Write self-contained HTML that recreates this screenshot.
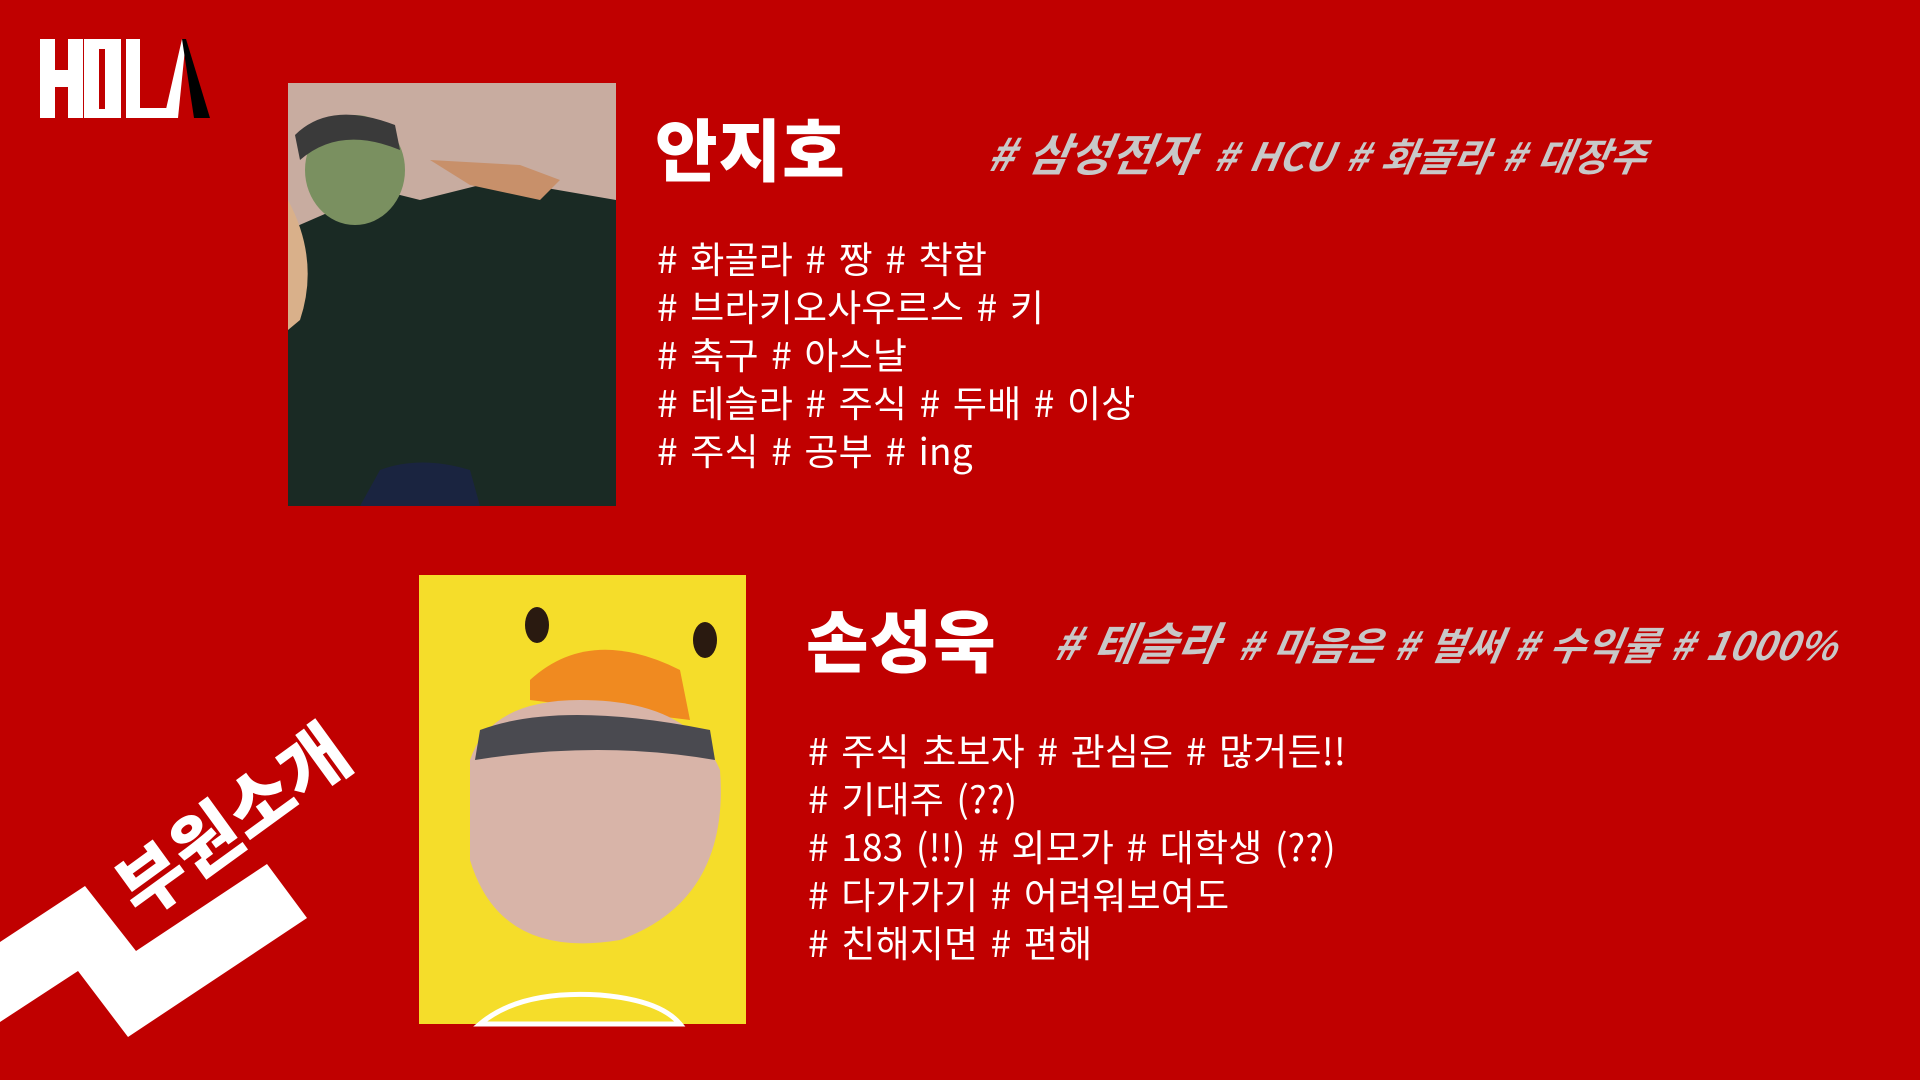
<!DOCTYPE html>
<html><head><meta charset="utf-8"><style>
*{margin:0;padding:0;box-sizing:border-box}
body{width:1920px;height:1080px;background:#c00000;position:relative;overflow:hidden;font-family:"Liberation Sans","Noto Sans CJK KR",sans-serif;color:#fff}
.abs{position:absolute}
.name{font-family:"Noto Sans CJK KR",sans-serif;font-weight:900;font-size:68px;line-height:1;letter-spacing:1px}
.tag{font-family:"Noto Sans CJK KR",sans-serif;font-weight:700;font-style:italic;color:#c8c8c8;white-space:nowrap;line-height:1;letter-spacing:0.3px;word-spacing:3px;transform:skewX(-10deg);transform-origin:left bottom}
.list{font-family:"Noto Sans CJK KR",sans-serif;font-size:37px;line-height:48px;letter-spacing:0.2px;word-spacing:4px;white-space:nowrap}
</style></head><body>
<svg class="abs" style="left:0;top:0" width="1920" height="1080">
  <g fill="#fff">
    <rect x="40" y="39" width="15" height="79"/><rect x="68" y="39" width="15" height="79"/><rect x="55" y="70" width="13" height="17"/>
    <path d="M84 39h37v79h-37zM99 49v60h6v-60z" fill-rule="evenodd"/>
    <path d="M126 39h14v69h33v10h-47z"/>
    <path d="M164 118l18-79h4l-8 79z"/>
  </g>
  <path d="M182 39h4l24 79h-16z" fill="#000"/>
  <polygon points="0,942 85,886 136,951 267,864 307,918 128,1037 78,971 0,1022" fill="#fff"/>
  <g>
    <rect x="288" y="83" width="328" height="423" fill="#c8aca0"/>
    <path d="M288 230 L380 190 L420 200 L500 180 L616 200 L616 506 L288 506Z" fill="#1a2a24"/>
    <ellipse cx="355" cy="170" rx="50" ry="55" fill="#7a9060"/>
    <path d="M295 135 Q330 100 395 125 L400 150 Q340 125 300 160Z" fill="#3a3a3a"/>
    <path d="M288 200 Q320 260 300 320 L288 330Z" fill="#d9b08a"/>
    <path d="M430 160 L520 165 L560 180 L540 200 L470 185Z" fill="#c8906a"/>
    <path d="M380 470 Q420 455 470 470 L480 506 L360 506Z" fill="#1a2440"/>
  </g>
  <g>
    <rect x="419" y="575" width="327" height="449" fill="#f5dd2a"/>
    <ellipse cx="537" cy="625" rx="12" ry="18" fill="#2a1a10"/>
    <ellipse cx="705" cy="640" rx="12" ry="18" fill="#2a1a10"/>
    <path d="M530 680 Q590 625 680 670 L690 720 L530 700Z" fill="#f08a20"/>
    <path d="M470 760 Q490 700 580 700 Q690 700 720 770 Q730 900 620 940 Q500 960 470 860Z" fill="#d8b4a8"/>
    <path d="M480 730 Q560 700 710 730 L715 760 Q600 740 475 760Z" fill="#4a4a50"/>
    <path d="M480 1024 Q520 990 600 995 Q660 1000 680 1024Z" fill="none" stroke="#fff" stroke-width="5"/>
  </g>
</svg>

<div class="abs" style="left:144px;top:852px;transform:rotate(-36deg);transform-origin:left bottom;font-family:'Noto Sans CJK KR',sans-serif;font-weight:900;font-size:72px;line-height:1;white-space:nowrap">부원소개</div>

<div class="abs name" style="left:655px;top:113px">안지호</div>
<div class="abs tag" style="left:985px;top:129px"><span style="font-size:45px"># 삼성전자</span> <span style="font-size:39px">&nbsp;# HCU # 화골라 # 대장주</span></div>
<div class="abs list" style="left:657px;top:233px"># 화골라 # 짱 # 착함<br># 브라키오사우르스 # 키<br># 축구 # 아스날<br># 테슬라 # 주식 # 두배 # 이상<br># 주식 # 공부 # ing</div>

<div class="abs name" style="left:806px;top:604px">손성욱</div>
<div class="abs tag" style="left:1051px;top:618px"><span style="font-size:45px"># 테슬라</span> <span style="font-size:39px">&nbsp;# 마음은 # 벌써 # 수익률 # 1000%</span></div>
<div class="abs list" style="left:808px;top:725px"># 주식 초보자 # 관심은 # 많거든!!<br># 기대주 (??)<br># 183 (!!) # 외모가 # 대학생 (??)<br># 다가가기 # 어려워보여도<br># 친해지면 # 편해</div>
</body></html>
